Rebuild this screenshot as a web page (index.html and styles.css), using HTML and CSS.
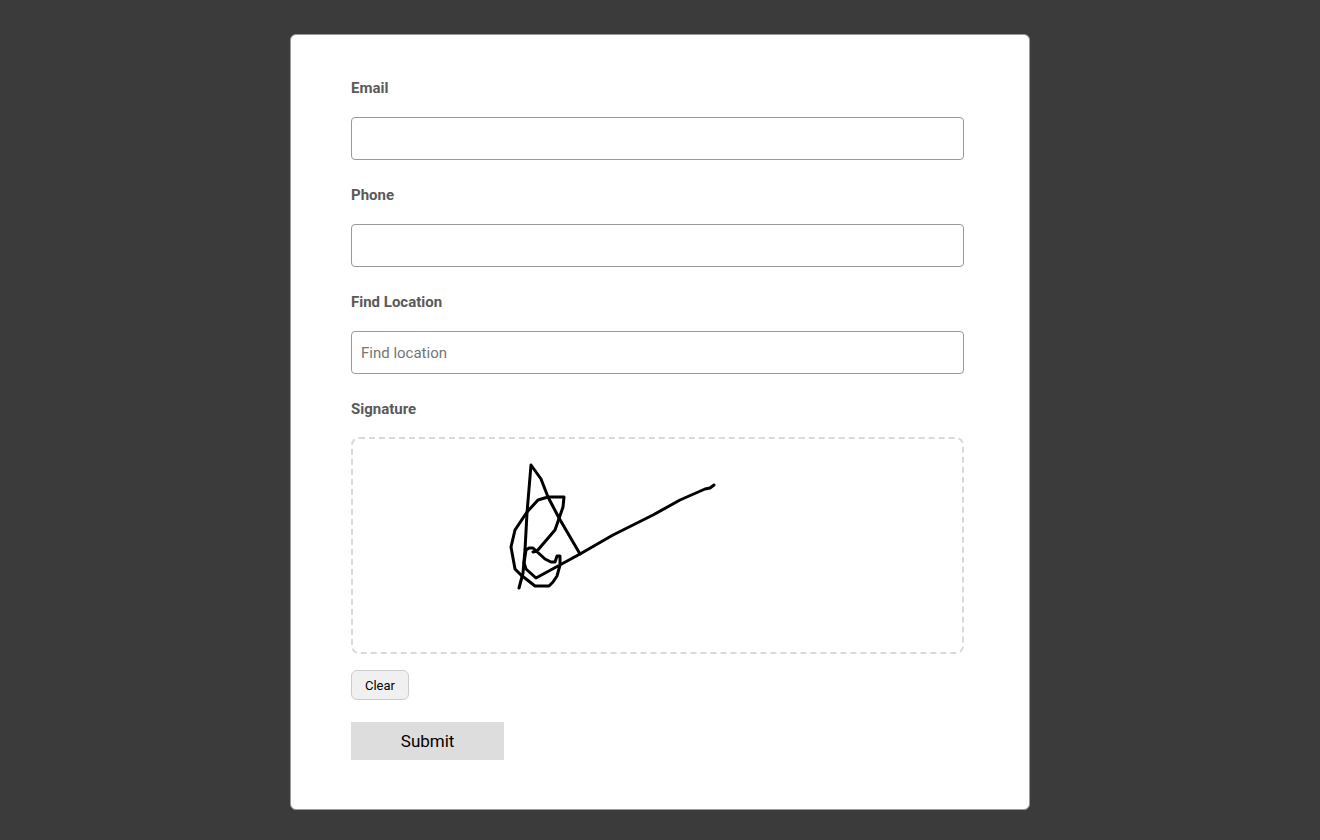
FILE: index.html
```html
<!DOCTYPE html>
<html lang="en">
<head>
    <meta charset="UTF-8">
    <meta name="viewport" content="width=device-width, initial-scale=1.0">
    <title>Contact Form</title>
    <link rel="stylesheet" href="styles.css">
</head>
<body>

    <form class="form-card">
        <div class="field">
            <label for="email">Email</label>
            <input type="email" id="email" name="email">
        </div>
        <div class="field">
            <label for="phone">Phone</label>
            <input type="tel" id="phone" name="phone">
        </div>
        <div class="field">
            <label for="location">Find Location</label>
            <input type="text" id="location" name="location" placeholder="Find location">
        </div>
        <div class="signature">
            <span class="signature-label" id="signatureLabel">Signature</span>
            <div class="signature-pad">
                <svg id="signaturePad" width="609" height="213" viewBox="0 0 609 213" role="img" aria-labelledby="signatureLabel">
                    <path d="M166 149L170 134L172 111L174 74L178 26L188 40L195 58L206 79L227 115"/>
                    <path d="M180 113L184 112L202 91L210 68L211 58H195L185 61L174 73L162 91L158 108L162 130L168 136L182 147H196L200 143L204 137L207 126V117H204L202 123H198L192 120L180 109H176L173 111L171 124L173 130L183 139L227 115L260 96L300 76L327 61L352 50L357 49L361 46"/>
                </svg>
            </div>
        </div>
        <button type="button" class="clear-btn" id="clearBtn">Clear</button>
        <button type="submit" class="submit-btn">Submit</button>
    </form>

    <script>
        document.getElementById("clearBtn").addEventListener("click", function () {
            document.getElementById("signaturePad").innerHTML = "";
        });
    </script>

</body>
</html>
```
FILE: styles.css
```css
* {
    box-sizing: border-box;
}
body {
    margin: 0;
    padding: 34px 20px 30px;
    background: #3b3b3b;
    color: #5a5a5a;
    font-family: Roboto, sans-serif;
    font-size: 15px;
    line-height: 20px;
}
.form-card {
    display: flex;
    flex-direction: column;
    align-items: flex-start;
    max-width: 740px;
    margin: 0 auto;
    padding: 43px 65px 49px 60px;
    background: white;
    border: 1px solid #999;
    border-radius: 6px;
}
.field {
    width: 100%;
    margin-bottom: 25px;
}
label, .signature-label {
    display: block;
    margin-bottom: 19px;
    font-weight: bold;
}
input {
    display: block;
    width: 100%;
    height: 43px;
    padding: 0 9px;
    background: white;
    border: 1px solid #999;
    border-radius: 4px;
    font-family: inherit;
    font-size: 15px;
}
input::placeholder {
    color: #757575;
}
.signature {
    width: 100%;
}
.signature-label {
    margin-bottom: 18px;
}
.signature-pad {
    height: 217px;
    border: 2px dashed #d9d9d9;
    border-radius: 8px;
    overflow: hidden;
}
.signature-pad svg {
    display: block;
    fill: none;
    stroke: black;
    stroke-width: 3;
    stroke-linejoin: round;
    stroke-linecap: round;
}
button {
    color: black;
    font-family: inherit;
    cursor: pointer;
}
.clear-btn {
    height: 30px;
    margin: 16px 0 22px;
    padding: 0 13px;
    background: #f0f0f0;
    border: 1px solid #ccc;
    border-radius: 6px;
    font-size: 13px;
}
.submit-btn {
    width: 25%;
    height: 38px;
    background: #ddd;
    border: none;
    font-size: 17px;
}
```
